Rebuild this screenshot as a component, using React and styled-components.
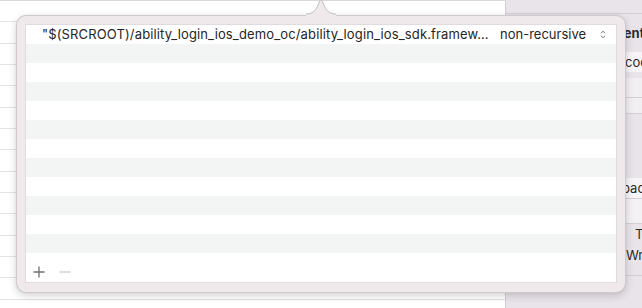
import React from 'react';
import styled, { createGlobalStyle } from 'styled-components';

const Global = createGlobalStyle`
  html, body { margin: 0; padding: 0; }
  body {
    width: 642px;
    height: 308px;
    overflow: hidden;
    background: #ffffff;
    font-family: Inter, "Liberation Sans", sans-serif;
    -webkit-font-smoothing: antialiased;
  }
  #root { height: 308px; }
`;

const Screen = styled.div`
  position: relative;
  width: 642px;
  height: 308px;
  display: flex;
  overflow: hidden;
`;

const LeftPane = styled.div`
  width: 506px;
  flex: none;
  box-sizing: border-box;
  background: #ffffff;
  border-top: 1px solid #d9d9d9;
  border-right: 1px solid #d4d0d6;
  display: flex;
  flex-direction: column;
`;

const ListRow = styled.div`
  height: 21.33px;
  flex: none;
  box-sizing: border-box;
  border-bottom: 1px solid #e3e3e3;
`;

const RightPane = styled.div`
  flex: 1;
  min-width: 0;
  background: #e9e4ea;
  display: flex;
  flex-direction: column;
  font-size: 13px;
  color: #2a2a2a;
`;

const Strip = styled.div`
  height: ${(p) => p.$h}px;
  flex: none;
  box-sizing: border-box;
  background: ${(p) => p.$bg || 'transparent'};
  border-bottom: ${(p) => (p.$line ? '1px solid #d4cfd7' : 'none')};
  padding-left: ${(p) => p.$indent || 0}px;
  display: flex;
  align-items: center;
  font-weight: ${(p) => (p.$bold ? 700 : 400)};
  white-space: nowrap;
  overflow: hidden;
`;

const Popover = styled.div`
  position: absolute;
  left: 16px;
  top: 15px;
  width: 610px;
  height: 278px;
  box-sizing: border-box;
  background: #efe9ec;
  border-radius: 10px;
  border: 1px solid rgba(0, 0, 0, 0.13);
  box-shadow: 0 3px 9px rgba(0, 0, 0, 0.16), 0 0 2px rgba(0, 0, 0, 0.08);
  padding: 9px 9px 10px 9px;
  display: flex;
`;

const Arrow = styled.svg`
  position: absolute;
  left: 289px;
  top: -17px;
  overflow: visible;
`;

const Table = styled.div`
  flex: 1;
  background: #ffffff;
  box-shadow: 0 0 0 1px #e0dbde;
  display: flex;
  flex-direction: column;
`;

const Row = styled.div`
  height: 19px;
  flex: none;
  display: flex;
  align-items: center;
  background: ${(p) => (p.$striped ? '#f3f4f4' : '#ffffff')};
  font-size: 13px;
  line-height: 19px;
  color: #252525;
  white-space: nowrap;
`;

const PathCell = styled.div`
  width: 474px;
  flex: none;
  box-sizing: border-box;
  padding-left: 16px;
  overflow: hidden;
  letter-spacing: 0.14px;
`;

const ModeCell = styled.div`
  flex: 1;
  display: flex;
  align-items: center;
  padding-right: 10px;
`;

const Chevron = styled.svg`
  margin-left: auto;
  display: block;
`;

const Footer = styled.div`
  flex: 1;
  display: flex;
  align-items: center;
  gap: 14px;
  padding-left: 7px;
  padding-top: 9px;
`;

const IconButton = styled.svg`
  display: block;
`;

const stripes = Array.from({ length: 11 }, (_, i) => i);
const listRows = Array.from({ length: 15 }, (_, i) => i);

export default function App() {
  return (
    <>
      <Global />
      <Screen>
        <LeftPane>
          {listRows.map((i) => (
            <ListRow key={i} />
          ))}
        </LeftPane>
        <RightPane>
          <Strip $h={14} $line />
          <Strip $h={38} $bold $indent={106}>Identity</Strip>
          <Strip $h={20} $bg="#f6f4f7" $indent={119}>cool</Strip>
          <Strip $h={6} />
          <Strip $h={20} $bg="#f2eff3" $line />
          <Strip $h={16} $bg="#f2eff3" $line />
          <Strip $h={64} />
          <Strip $h={21} $bg="#f6f4f7" $indent={116} $line>pack</Strip>
          <Strip $h={25} $bg="#f3f1f4" $line />
          <Strip $h={20} $indent={129}>T</Strip>
          <Strip $h={22} $indent={120}>Wr</Strip>
          <Strip $h={10} $line />
        </RightPane>

        <Popover>
          <Arrow width="30" height="17" viewBox="0 0 30 17">
            <path
              d="M0,15 C7,15 9.5,11.5 12,6 L13.6,2 Q15,-0.6 16.4,2 L18,6 C20.5,11.5 23,15 30,15 L30,18 L0,18 Z"
              fill="#efe9ec"
            />
            <path
              d="M0,15 C7,15 9.5,11.5 12,6 L13.6,2 Q15,-0.6 16.4,2 L18,6 C20.5,11.5 23,15 30,15"
              fill="none"
              stroke="rgba(0,0,0,0.2)"
              strokeWidth="1"
            />
          </Arrow>
          <Table>
            <Row>
              <PathCell>"$(SRCROOT)/ability_login_ios_demo_oc/ability_login_ios_sdk.framew…</PathCell>
              <ModeCell>
                non-recursive
                <Chevron width="6" height="9" viewBox="0 0 6 9">
                  <path d="M1,3.2 L3,1.2 L5,3.2" fill="none" stroke="#6a6a6a" strokeWidth="1" />
                  <path d="M1,5.8 L3,7.8 L5,5.8" fill="none" stroke="#6a6a6a" strokeWidth="1" />
                </Chevron>
              </ModeCell>
            </Row>
            {stripes.map((i) => (
              <Row key={i} $striped={i % 2 === 0} />
            ))}
            <Footer>
              <IconButton width="12" height="12" viewBox="0 0 12 12">
                <path d="M6,0.5 V11.5 M0.5,6 H11.5" stroke="#707070" strokeWidth="1.3" />
              </IconButton>
              <IconButton width="12" height="12" viewBox="0 0 12 12">
                <path d="M0.5,6 H11.5" stroke="#c6c6c6" strokeWidth="1.2" />
              </IconButton>
            </Footer>
          </Table>
        </Popover>
      </Screen>
    </>
  );
}
